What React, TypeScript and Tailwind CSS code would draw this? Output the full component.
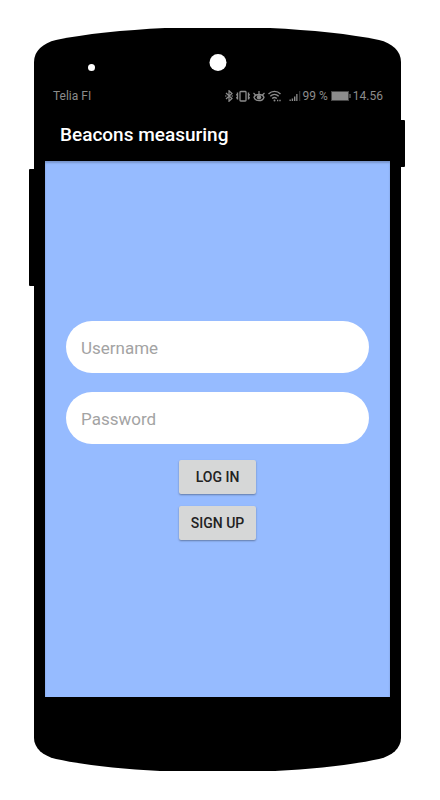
function BluetoothIcon() {
  return (
    <svg className="h-3 w-2" viewBox="0 0 8 12" fill="none" stroke="currentColor" strokeWidth="1.200" aria-hidden="true">
      <path d="M1 3 7 8.500 4 11.300V0.700L7 3.500 1 9" />
      <path d="M0 6h1.500M6.500 6H8" />
    </svg>
  );
}

function VibrateIcon() {
  return (
    <svg className="h-3 w-[14px]" viewBox="0 0 14 12" fill="none" stroke="currentColor" aria-hidden="true">
      <rect x="4" y="1.500" width="6" height="9.500" rx="0.800" strokeWidth="1.300" />
      <path d="M1.500 2.500v7M12.500 2.500v7" strokeWidth="1.400" />
      <path d="M0.300 4v1.500M0.300 7v1.500M13.700 4v1.500M13.700 7v1.500" />
    </svg>
  );
}

function EyeIcon() {
  return (
    <svg className="h-3 w-3" viewBox="0 0 12 12" fill="none" stroke="currentColor" aria-hidden="true">
      <path d="M1 7.200C2.500 3.600 9.500 3.600 11 7.200 9.500 11.800 2.500 11.800 1 7.200Z" strokeWidth="1.300" />
      <circle cx="6" cy="7.300" r="2.200" fill="currentColor" stroke="none" />
      <path d="M6 4.500V1M2.800 5.200 0.500 3M9.200 5.200 11.500 3" strokeWidth="1.200" />
    </svg>
  );
}

function WifiIcon() {
  return (
    <svg className="h-3 w-[13px]" viewBox="0 0 13 12" fill="none" stroke="currentColor" strokeWidth="1.400" aria-hidden="true">
      <path d="M0.500 4C4 0.500 9 0.500 12.500 4M2.300 6.300c2.500-2.500 5.900-2.500 8.400 0M4.200 8.500c1.400-1.300 3.200-1.300 4.600 0" />
      <circle cx="6.500" cy="10.500" r="1" fill="currentColor" stroke="none" />
      <path d="M9 10.500h1.300M11.300 10.500h1.400" />
    </svg>
  );
}

function SignalIcon() {
  return (
    <svg className="h-3 w-3" viewBox="0 0 12 12" fill="currentColor" aria-hidden="true">
      <path d="M0.500 9.500h1.300V11H0.500ZM2.700 8.500h1.400V11H2.700ZM5 6.500h1.400V11H5ZM7.200 4h1.300v7H7.200Z" />
      <path d="M10 1h1.300v10H10Z" opacity="0.350" />
    </svg>
  );
}

function BatteryIcon() {
  return (
    <svg className="h-3 w-5" viewBox="0 0 20 12" aria-hidden="true">
      <rect x="0.500" y="1.500" width="17" height="9" fill="none" stroke="currentColor" opacity="0.500" />
      <path d="M1 2h16v8H1ZM18.500 4h1v4h-1Z" fill="currentColor" />
    </svg>
  );
}

function StatusBar() {
  return (
    <div className="flex h-4 items-center justify-between pl-2 pr-[7px] text-xs text-[#8c8c8c]">
      <span>Telia FI</span>
      <div className="flex items-center">
        <div className="mr-2 flex items-center gap-[3px]">
          <BluetoothIcon />
          <VibrateIcon />
          <EyeIcon />
          <WifiIcon />
        </div>
        <SignalIcon />
        <span className="ml-[2px] mr-[3px]">99 %</span>
        <BatteryIcon />
        <span className="ml-[2px]">14.56</span>
      </div>
    </div>
  );
}

function Field({ label, type }: { label: string; type: string }) {
  return (
    <input
      type={type}
      aria-label={label}
      placeholder={label}
      className="block h-[52px] w-full rounded-[26px] bg-white px-[15px] pt-[2px] text-[17px] text-[#222222] outline-none placeholder:text-[#a3a3a3]"
    />
  );
}

function FormButton({ children, type }: { children: string; type: "submit" | "button" }) {
  return (
    <button
      type={type}
      className="h-[34px] w-[77px] rounded-[2px] bg-[#d6d7d7] text-sm font-medium text-[#222222] shadow-[0_1px_2px_rgba(0,0,0,0.35)]"
    >
      {children}
    </button>
  );
}

export default function App() {
  return (
    <div className="min-h-screen bg-white pb-7 pl-[34px] pr-[39px] pt-7 font-[Roboto,sans-serif]">
      <div className="relative">
        <span className="absolute -left-[5px] top-[141px] h-[117px] w-[5px] rounded-l-[1px] bg-black" />
        <span className="absolute -right-1 top-[92px] h-[47px] w-1 rounded-r-[1px] bg-black" />
        <span className="absolute left-[54px] top-[36px] size-[7px] rounded-full bg-white" />
        <span className="absolute left-1/2 top-[26px] size-[17px] -translate-x-1/2 rounded-full bg-white" />

        <svg className="block h-[34px] w-full" viewBox="0 0 367 34" preserveAspectRatio="none" aria-hidden="true">
          <path d="M0 34C0 23 9 15 22 12 50 6 90 2 131 0H236C277 2 317 6 345 12 358 15 367 23 367 34Z" />
        </svg>

        <div className="bg-black px-[11px] pb-[41px] pt-[26px]">
          <StatusBar />
          <header className="flex h-[57px] items-center px-[15px] pt-[5px]">
            <h1 className="text-[19px] font-medium leading-6 text-white">Beacons measuring</h1>
          </header>
          <main className="flex min-h-[536px] flex-col justify-center bg-[#96bbff] px-[21px] pt-[2px] shadow-[inset_0_2px_2px_rgba(0,0,0,0.2)]">
            <form onSubmit={(event) => event.preventDefault()}>
              <div className="flex flex-col gap-[19px]">
                <Field label="Username" type="text" />
                <Field label="Password" type="password" />
              </div>
              <div className="mt-4 flex flex-col items-center gap-3">
                <FormButton type="submit">LOG IN</FormButton>
                <FormButton type="button">SIGN UP</FormButton>
              </div>
            </form>
          </main>
        </div>

        <svg className="block h-[33px] w-full" viewBox="0 0 367 33" preserveAspectRatio="none" aria-hidden="true">
          <path d="M0 0C0 10 9 18 22 21 50 27 85 31 126 33H241C282 31 317 27 345 21 358 18 367 10 367 0Z" />
        </svg>
      </div>
    </div>
  );
}
